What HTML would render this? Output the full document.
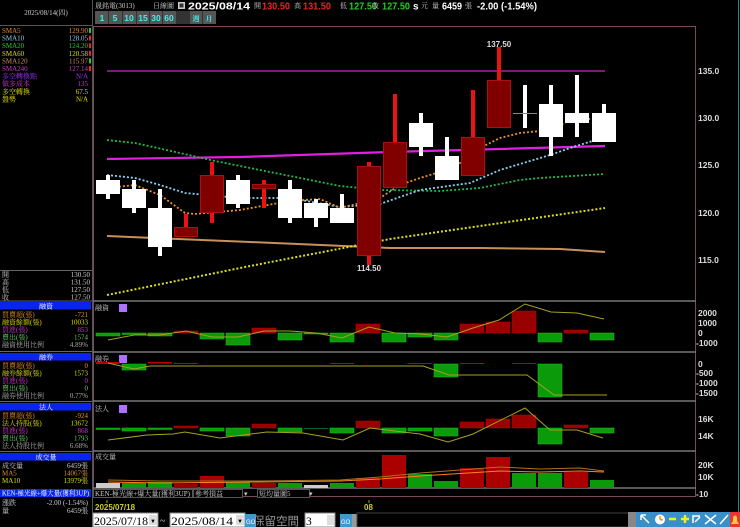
<!DOCTYPE html>
<html><head><meta charset="utf-8">
<style>
html,body{margin:0;padding:0;background:#000;width:740px;height:527px;overflow:hidden}
svg{display:block}
text{font-family:"Liberation Serif","Noto Serif CJK SC","WenQuanYi Zen Hei",serif;font-size:7px}
.b{font-family:"Liberation Sans","Noto Sans CJK TC",sans-serif;font-weight:bold;font-size:10px}
.ax{font-family:"Liberation Sans",sans-serif;font-weight:bold;font-size:8.5px;fill:#ddd}
</style></head><body>
<svg width="740" height="527" viewBox="0 0 740 527" xmlns="http://www.w3.org/2000/svg">
<rect width="740" height="527" fill="#000"/>
<!-- left panel -->
<line x1="92.5" y1="0" x2="92.5" y2="527" stroke="#555" stroke-width="1"/>
<line x1="0" y1="25.5" x2="92" y2="25.5" stroke="#555"/>
<text x="46" y="15" fill="#ccc" text-anchor="middle">2025/08/14(四)</text>
<g text-anchor="start">
<text x="2" y="33" fill="#e08a2a">SMA5</text>
<text x="2" y="40.6" fill="#8cc8e8">SMA10</text>
<text x="2" y="48.2" fill="#22cc22">SMA20</text>
<text x="2" y="55.8" fill="#dddd00">SMA60</text>
<text x="2" y="63.4" fill="#c89060">SMA120</text>
<text x="2" y="71" fill="#cc33cc">SMA240</text>
<text x="2" y="78.6" fill="#9933ff">多空轉換點</text>
<text x="2" y="86.2" fill="#cc33cc">做多成本</text>
<text x="2" y="93.8" fill="#dddd00">多空轉換</text>
<text x="2" y="101.4" fill="#dddd00">盤勢</text>
</g>
<g text-anchor="end">
<text x="88" y="33" fill="#e08a2a">129.90</text>
<text x="88" y="40.6" fill="#8cc8e8">128.05</text>
<text x="88" y="48.2" fill="#22cc22">124.20</text>
<text x="88" y="55.8" fill="#dddd00">120.58</text>
<text x="88" y="63.4" fill="#c89060">115.97</text>
<text x="88" y="71" fill="#cc33cc">127.14</text>
<text x="88" y="78.6" fill="#9933ff">N/A</text>
<text x="88" y="86.2" fill="#cc33cc">135</text>
<text x="88" y="93.8" fill="#dddd00">67.5</text>
<text x="88" y="101.4" fill="#dddd00">N/A</text>
</g>
<rect x="89" y="28" width="2" height="5" fill="#2c2"/><rect x="89" y="35.6" width="2" height="5" fill="#e22"/><rect x="89" y="43.2" width="2" height="5" fill="#e22"/><rect x="89" y="50.8" width="2" height="5" fill="#e22"/><rect x="89" y="58.4" width="2" height="5" fill="#2c2"/><rect x="89" y="66" width="2" height="5" fill="#e22"/>
<line x1="0" y1="270.5" x2="92" y2="270.5" stroke="#666"/>
<g fill="#ccc"><text x="2" y="277">開</text><text x="2" y="284.5">高</text><text x="2" y="292">低</text><text x="2" y="299.5">收</text></g>
<g fill="#ccc" text-anchor="end"><text x="90" y="277">130.50</text><text x="90" y="284.5">131.50</text><text x="90" y="292">127.50</text><text x="90" y="299.5">127.50</text></g>
<line x1="0" y1="301" x2="92" y2="301" stroke="#666"/>
<!-- panel 1 left -->
<rect x="0" y="302" width="91" height="7.5" fill="#0a24f0"/><text x="46" y="308.5" fill="#fff" text-anchor="middle">融資</text>
<text x="2" y="317" fill="#e08a2a">買賣超(張)</text><text x="2" y="324.5" fill="#dddd00">融資餘額(張)</text><text x="2" y="332" fill="#cc33cc">買進(張)</text><text x="2" y="339.5" fill="#6c6">賣出(張)</text><text x="2" y="347" fill="#aaa">融資使用比例</text>
<g text-anchor="end"><text x="88" y="317" fill="#e08a2a">-721</text><text x="88" y="324.5" fill="#dddd00">10033</text><text x="88" y="332" fill="#cc33cc">853</text><text x="88" y="339.5" fill="#6c6">1574</text><text x="88" y="347" fill="#aaa">4.89%</text></g>
<line x1="0" y1="351.5" x2="92" y2="351.5" stroke="#666"/>
<rect x="0" y="353" width="91" height="7.5" fill="#0a24f0"/><text x="46" y="359.5" fill="#fff" text-anchor="middle">融券</text>
<text x="2" y="368" fill="#e08a2a">買賣超(張)</text><text x="2" y="375.5" fill="#dddd00">融券餘額(張)</text><text x="2" y="383" fill="#cc33cc">買進(張)</text><text x="2" y="390.5" fill="#6c6">賣出(張)</text><text x="2" y="398" fill="#aaa">融券使用比例</text>
<g text-anchor="end"><text x="88" y="368" fill="#e08a2a">0</text><text x="88" y="375.5" fill="#dddd00">1573</text><text x="88" y="383" fill="#cc33cc">0</text><text x="88" y="390.5" fill="#6c6">0</text><text x="88" y="398" fill="#aaa">0.77%</text></g>
<line x1="0" y1="401.5" x2="92" y2="401.5" stroke="#666"/>
<rect x="0" y="403" width="91" height="7.5" fill="#0a24f0"/><text x="46" y="409.5" fill="#fff" text-anchor="middle">法人</text>
<text x="2" y="418" fill="#e08a2a">買賣超(張)</text><text x="2" y="425.5" fill="#dddd00">法人持股(張)</text><text x="2" y="433" fill="#cc33cc">買進(張)</text><text x="2" y="440.5" fill="#6c6">賣出(張)</text><text x="2" y="448" fill="#aaa">法人持股比例</text>
<g text-anchor="end"><text x="88" y="418" fill="#e08a2a">-924</text><text x="88" y="425.5" fill="#dddd00">13672</text><text x="88" y="433" fill="#cc33cc">868</text><text x="88" y="440.5" fill="#6c6">1793</text><text x="88" y="448" fill="#aaa">6.68%</text></g>
<line x1="0" y1="451.5" x2="92" y2="451.5" stroke="#666"/>
<rect x="0" y="453" width="91" height="7.5" fill="#0a24f0"/><text x="46" y="459.5" fill="#fff" text-anchor="middle">成交量</text>
<text x="2" y="468" fill="#ccc">成交量</text><text x="2" y="475.5" fill="#e08a2a">MA5</text><text x="2" y="483" fill="#dddd00">MA10</text>
<g text-anchor="end"><text x="88" y="468" fill="#ccc">6459張</text><text x="88" y="475.5" fill="#e08a2a">14067張</text><text x="88" y="483" fill="#dddd00">13979張</text></g>
<rect x="0" y="489" width="91" height="8" fill="#0a24f0"/><text x="2" y="495.5" fill="#fff" textLength="87" lengthAdjust="spacingAndGlyphs">KEN-極光線+爆大量(獲利3UP)</text>
<text x="2" y="505" fill="#ccc">漲跌</text><text x="88" y="505" fill="#ccc" text-anchor="end">-2.00 (-1.54%)</text>
<text x="2" y="513" fill="#ccc">量</text><text x="88" y="513" fill="#ccc" text-anchor="end">6459張</text>

<!-- header -->
<text x="95" y="8" fill="#ccc">晟銘電(3013)</text>
<text x="153" y="8" fill="#ccc">日線圖</text>
<rect x="178" y="2" width="7" height="7" fill="#ccc"/><rect x="179.5" y="3.5" width="4" height="4" fill="#333"/>
<text class="b" x="188" y="9.5" fill="#fff" textLength="62" lengthAdjust="spacingAndGlyphs">2025/08/14</text>
<text x="254" y="8" fill="#ccc">開</text><text class="b" x="262" y="9.5" fill="#e22" textLength="28" lengthAdjust="spacingAndGlyphs">130.50</text>
<text x="294" y="8" fill="#ccc">高</text><text class="b" x="303" y="9.5" fill="#e22" textLength="28" lengthAdjust="spacingAndGlyphs">131.50</text>
<text x="340" y="8" fill="#ccc">低</text><text class="b" x="349" y="9.5" fill="#2c2" textLength="28" lengthAdjust="spacingAndGlyphs">127.50</text>
<text x="372" y="8" fill="#ccc">收</text><text class="b" x="382" y="9.5" fill="#2c2" textLength="28" lengthAdjust="spacingAndGlyphs">127.50</text>
<text class="b" x="413" y="9.5" fill="#fff">s</text><text x="421" y="8" fill="#ccc">元</text>
<text x="432" y="8" fill="#ccc">量</text><text class="b" x="442" y="9.5" fill="#fff" textLength="20" lengthAdjust="spacingAndGlyphs">6459</text><text x="465" y="8" fill="#ccc">張</text>
<text class="b" x="477" y="9.5" fill="#fff" textLength="60" lengthAdjust="spacingAndGlyphs">-2.00 (-1.54%)</text>
<!-- buttons -->
<rect x="95" y="11" width="121" height="13" fill="#555"/>
<g stroke="#333" stroke-width="1"><line x1="108.5" y1="11" x2="108.5" y2="24"/><line x1="122.5" y1="11" x2="122.5" y2="24"/><line x1="136.5" y1="11" x2="136.5" y2="24"/><line x1="149.5" y1="11" x2="149.5" y2="24"/><line x1="162.5" y1="11" x2="162.5" y2="24"/><line x1="176.5" y1="11" x2="176.5" y2="24"/><line x1="189.5" y1="11" x2="189.5" y2="24"/><line x1="202.5" y1="11" x2="202.5" y2="24"/></g>
<rect x="177" y="11" width="12" height="13" fill="#333"/>
<g fill="#4ee" text-anchor="middle" style="font-family:Liberation Sans;font-weight:bold"><text x="102" y="21" style="font-size:8.5px;font-family:Liberation Sans">1</text><text x="115" y="21" style="font-size:8.5px;font-family:Liberation Sans">5</text><text x="129" y="21" style="font-size:8.5px;font-family:Liberation Sans">10</text><text x="143" y="21" style="font-size:8.5px;font-family:Liberation Sans">15</text><text x="156" y="21" style="font-size:8.5px;font-family:Liberation Sans">30</text><text x="169" y="21" style="font-size:8.5px;font-family:Liberation Sans">60</text><text x="196" y="21">週</text><text x="209" y="21">月</text></g>

<!-- main frame -->
<rect x="93.5" y="26.5" width="602" height="470" fill="none" stroke="#7a4a5a"/>
<line x1="738.5" y1="0" x2="738.5" y2="527" stroke="#1a8a8a"/>
<g><text class="ax" x="698" y="74">135.0</text><text class="ax" x="698" y="121">130.0</text><text class="ax" x="698" y="168">125.0</text><text class="ax" x="698" y="216">120.0</text><text class="ax" x="698" y="263">115.0</text>
<text class="ax" x="698" y="316">2000</text><text class="ax" x="698" y="326">1000</text><text class="ax" x="698" y="336">0</text><text class="ax" x="696" y="346">-1000</text>
<text class="ax" x="698" y="367">0</text><text class="ax" x="696" y="376">-500</text><text class="ax" x="696" y="386">-1000</text><text class="ax" x="696" y="396">-1500</text>
<text class="ax" x="698" y="422">16K</text><text class="ax" x="698" y="439">14K</text>
<text class="ax" x="698" y="468">20K</text><text class="ax" x="698" y="480">10K</text><text class="ax" x="696" y="497">-10</text></g>

<!-- MA lines main -->
<line x1="107" y1="71" x2="605" y2="71" stroke="#7a1a7a" stroke-width="2"/>
<polyline points="107,159 240,157 390,152 500,149 605,146" fill="none" stroke="#e020e0" stroke-width="2.2"/>
<polyline points="107,236 250,242 390,248 480,248 560,249 605,252" fill="none" stroke="#c8905a" stroke-width="2"/>
<polyline points="107,295 250,266 390,239 480,226 605,208" fill="none" stroke="#dddd22" stroke-width="2" stroke-dasharray="2,2"/>
<polyline points="107,140 135,143 180,153 215,161 300,178 340,186 380,190 440,191 480,188 520,180 540,178 605,174" fill="none" stroke="#22bb44" stroke-width="1.8" stroke-dasharray="2,2"/>
<polyline points="107,175 135,178 160,185 185,193 240,198 290,198 340,207 380,204 420,190 470,183 500,170 550,155 570,148 605,137" fill="none" stroke="#8cd0f0" stroke-width="1.8" stroke-dasharray="2,2"/>
<polyline points="107,188 135,185 160,195 185,213 195,214 240,210 290,201 320,199 340,208 380,198 400,185 420,178 440,172 460,163 480,148 500,138 520,133 550,130 575,118 605,120" fill="none" stroke="#e8902a" stroke-width="1.8" stroke-dasharray="2,2"/>

<!-- candles -->
<g fill="#fff">
<rect x="106" y="175" width="4" height="24"/><rect x="96" y="180" width="24" height="14"/>
<rect x="132" y="180" width="4" height="33"/><rect x="122" y="189" width="24" height="19"/>
<rect x="158" y="189" width="4" height="67"/><rect x="148" y="208" width="24" height="39"/>
<rect x="236" y="175" width="4" height="33"/><rect x="226" y="180" width="24" height="24"/>
<rect x="288" y="180" width="4" height="43"/><rect x="278" y="189" width="24" height="29"/>
<rect x="314" y="199" width="4" height="28"/><rect x="304" y="203" width="24" height="15"/>
<rect x="340" y="194" width="4" height="29"/><rect x="330" y="208" width="24" height="15"/>
<rect x="419" y="113" width="4" height="43"/><rect x="409" y="123" width="24" height="24"/>
<rect x="445" y="137" width="4" height="43"/><rect x="435" y="156" width="24" height="24"/>
<rect x="523" y="85" width="4" height="43"/>
<rect x="549" y="85" width="4" height="71"/><rect x="539" y="104" width="24" height="33"/>
<rect x="575" y="75" width="4" height="62"/><rect x="565" y="113" width="24" height="10"/>
<rect x="602" y="104" width="4" height="38"/><rect x="592" y="113" width="24" height="29"/>
</g>
<line x1="513" y1="113.5" x2="537" y2="113.5" stroke="#888" stroke-width="1"/>
<g fill="#ee1111">
<rect x="184" y="214" width="4" height="14"/><rect x="210" y="162" width="4" height="61"/><rect x="262" y="180" width="4" height="28"/>
<rect x="367" y="162" width="4" height="103"/><rect x="393" y="94" width="4" height="50"/><rect x="471" y="90" width="4" height="50"/><rect x="497" y="47" width="4" height="35"/>
</g>
<g fill="#800000" stroke="#aa1010" stroke-width="1">
<rect x="174.5" y="227.5" width="23" height="9"/>
<rect x="200.5" y="175.5" width="23" height="37"/>
<rect x="252.5" y="184.5" width="23" height="4"/>
<rect x="357.5" y="166.5" width="23" height="89"/>
<rect x="383.5" y="142.5" width="23" height="45"/>
<rect x="461.5" y="137.5" width="23" height="38"/>
<rect x="487.5" y="80.5" width="23" height="47"/>
</g>
<text x="499" y="47" fill="#ddd" text-anchor="middle" style="font-family:Liberation Sans;font-weight:bold;font-size:8px">137.50</text>
<text x="369" y="271" fill="#ddd" text-anchor="middle" style="font-family:Liberation Sans;font-weight:bold;font-size:8px">114.50</text>

<!-- separators -->
<g stroke="#777" stroke-width="1.5"><line x1="93" y1="301" x2="696" y2="301"/><line x1="93" y1="352" x2="696" y2="352"/><line x1="93" y1="401" x2="696" y2="401"/><line x1="93" y1="451" x2="696" y2="451"/><line x1="93" y1="488" x2="696" y2="488"/></g>

<!-- panel1 -->
<text x="95" y="310" fill="#ccc">融資</text><rect x="119" y="304" width="8" height="8" fill="#b070ff"/>
<g fill="#0a9a0a" stroke="#1c1" stroke-width="0.5">
<rect x="96" y="333" width="24" height="3"/><rect x="122" y="333" width="24" height="1.5"/><rect x="148" y="333" width="24" height="3"/>
<rect x="200" y="333" width="24" height="6"/><rect x="226" y="333" width="24" height="12"/><rect x="278" y="333" width="24" height="7"/><rect x="304" y="333" width="24" height="1"/><rect x="330" y="333" width="24" height="9"/><rect x="382" y="333" width="24" height="9"/><rect x="408" y="333" width="24" height="4"/><rect x="434" y="333" width="24" height="7"/><rect x="538" y="333" width="24" height="9"/><rect x="590" y="333" width="24" height="7"/>
</g>
<g fill="#900" stroke="#b00" stroke-width="0.5">
<rect x="174" y="331" width="24" height="2"/><rect x="252" y="328" width="24" height="5"/><rect x="356" y="324" width="24" height="9"/><rect x="460" y="324" width="24" height="9"/><rect x="486" y="322" width="24" height="11"/><rect x="512" y="311" width="24" height="22"/><rect x="564" y="330" width="24" height="3"/>
</g>
<polyline points="108,340 134,335 160,335 186,331 212,337 238,337 264,331 290,331 316,333 342,338 369,327 395,333 421,334 447,337 473,328 499,320 525,304 551,312 577,313 604,319" fill="none" stroke="#a8a020" stroke-width="1"/>

<!-- panel2 -->
<text x="95" y="361" fill="#ccc">融券</text><rect x="119" y="355" width="8" height="8" fill="#b070ff"/>
<g fill="#b00"><rect x="96" y="362" width="24" height="2"/><rect x="148" y="362" width="24" height="1.5"/><rect x="174" y="363" width="24" height="1"/><rect x="330" y="363" width="24" height="1"/><rect x="408" y="363" width="24" height="1"/><rect x="460" y="363" width="24" height="1"/><rect x="512" y="363" width="24" height="1"/></g>
<g fill="#0a9a0a" stroke="#1c1" stroke-width="0.5"><rect x="122" y="364" width="24" height="6"/><rect x="434" y="364" width="24" height="13"/><rect x="538" y="364" width="24" height="33"/></g>
<polyline points="108,363 134,369 150,366 423,366 449,375 527,375 554,395 607,395" fill="none" stroke="#a8a020" stroke-width="1"/>

<!-- panel3 -->
<text x="95" y="411" fill="#ccc">法人</text><rect x="119" y="405" width="8" height="8" fill="#b070ff"/>
<g fill="#0a9a0a" stroke="#1c1" stroke-width="0.5">
<rect x="96" y="428" width="24" height="1.5"/><rect x="122" y="428" width="24" height="3"/><rect x="148" y="428" width="24" height="1.5"/><rect x="200" y="428" width="24" height="3"/><rect x="226" y="428" width="24" height="8"/><rect x="278" y="428" width="24" height="4"/><rect x="330" y="428" width="24" height="5"/><rect x="382" y="428" width="24" height="5"/><rect x="408" y="428" width="24" height="3"/><rect x="434" y="428" width="24" height="8"/><rect x="538" y="428" width="24" height="16"/><rect x="590" y="428" width="24" height="5"/>
</g>
<rect x="304" y="428" width="24" height="1" fill="#063"/>
<g fill="#900" stroke="#b00" stroke-width="0.5"><rect x="174" y="426" width="24" height="2"/><rect x="252" y="424" width="24" height="4"/><rect x="356" y="421" width="24" height="7"/><rect x="460" y="422" width="24" height="6"/><rect x="486" y="419" width="24" height="9"/><rect x="512" y="415" width="24" height="13"/><rect x="564" y="425" width="24" height="3"/></g>
<polyline points="108,440 147,435 173,434 185,432 220,438 267,432 303,433 343,440 370,428 420,434 448,442 473,434 525,408 550,430 577,430 603,438" fill="none" stroke="#a8a020" stroke-width="1"/>

<!-- panel4 volume -->
<text x="95" y="459" fill="#ccc">成交量</text>
<rect x="96" y="483" width="24" height="5" fill="#ccc"/>
<rect x="122" y="483" width="24" height="5" fill="#0a9a0a"/><rect x="148" y="482" width="24" height="6" fill="#0a9a0a"/>
<rect x="174" y="484" width="24" height="4" fill="#900"/><rect x="200" y="476" width="24" height="12" fill="#a00"/>
<rect x="226" y="482" width="24" height="6" fill="#0a9a0a"/><rect x="252" y="483" width="24" height="5" fill="#900"/>
<rect x="278" y="483" width="24" height="5" fill="#0a9a0a"/><rect x="304" y="485" width="24" height="3" fill="#ccc"/>
<rect x="330" y="483" width="24" height="5" fill="#0a9a0a"/><rect x="356" y="478" width="24" height="10" fill="#a00"/>
<rect x="382" y="455" width="24" height="33" fill="#a00"/><rect x="408" y="474" width="24" height="14" fill="#0a9a0a"/>
<rect x="434" y="481" width="24" height="7" fill="#0a9a0a"/><rect x="460" y="468" width="24" height="20" fill="#a00"/>
<rect x="486" y="457" width="24" height="31" fill="#a00"/><rect x="512" y="473" width="24" height="15" fill="#0a9a0a"/>
<rect x="538" y="473" width="24" height="15" fill="#0a9a0a"/><rect x="564" y="472" width="24" height="16" fill="#a00"/>
<rect x="590" y="480" width="24" height="8" fill="#0a9a0a"/>
<polyline points="108,482 160,483 260,482 340,481 380,479 420,476 500,471 540,472 580,471 604,472" fill="none" stroke="#ff8020" stroke-width="1"/>
<polyline points="108,480 160,481 260,481 340,480 380,477 420,473 460,470 500,467 540,469 580,468 604,471" fill="none" stroke="#b07020" stroke-width="1"/>

<!-- dropdowns -->
<rect x="93.5" y="489.5" width="99" height="8" fill="#000" stroke="#555"/><text x="95" y="496" fill="#ccc" textLength="95" lengthAdjust="spacingAndGlyphs">KEN-極光線+爆大量(獲利3UP)</text>
<rect x="193.5" y="489.5" width="49" height="8" fill="#000" stroke="#555"/><text x="195" y="496" fill="#ccc">參考損益</text><text x="244" y="496" fill="#ccc">▾</text>
<rect x="257.5" y="489.5" width="52" height="8" fill="#000" stroke="#555"/><text x="259" y="496" fill="#ccc">短均量圖5</text><text x="309" y="496" fill="#ccc">▾</text>
<line x1="107" y1="500" x2="107" y2="503" stroke="#aa0"/>
<text x="95" y="510" fill="#cccc33" style="font-family:Liberation Sans;font-weight:bold;font-size:8px">2025/07/18</text>
<line x1="369" y1="500" x2="369" y2="503" stroke="#aa0"/>
<text x="364" y="510" fill="#cccc33" style="font-family:Liberation Sans;font-weight:bold;font-size:8px">08</text>
<!-- bottom inputs -->
<rect x="93" y="513" width="65" height="14" fill="#fff" stroke="#888"/><text x="94" y="525" fill="#000" style="font-size:11.5px" textLength="54" lengthAdjust="spacingAndGlyphs">2025/07/18</text><rect x="149" y="515" width="8" height="10" fill="#ddd"/><text x="150" y="523" fill="#000" style="font-size:6px">▼</text>
<text x="160" y="524" fill="#ccc" style="font-size:10px">~</text>
<rect x="170" y="513" width="75" height="14" fill="#fff" stroke="#888"/><text x="171" y="525" fill="#000" style="font-size:11.5px" textLength="62" lengthAdjust="spacingAndGlyphs">2025/08/14</text><rect x="236" y="515" width="8" height="10" fill="#ddd"/><text x="237" y="523" fill="#000" style="font-size:6px">▼</text>
<rect x="245" y="514" width="11" height="13" fill="#3a9ad0"/><text x="246" y="524" fill="#fff" style="font-size:6px;font-family:Liberation Sans">GO</text>
<text x="253" y="525" fill="#999" style="font-size:11.5px;font-family:'Noto Sans CJK TC',sans-serif">保留空間</text>
<rect x="305" y="513" width="30" height="14" fill="#fff" stroke="#888"/><text x="306" y="525" fill="#000" style="font-size:11.5px">3</text><rect x="327" y="515" width="7" height="10" fill="#ddd"/>
<rect x="340" y="514" width="12" height="13" fill="#3a9ad0"/><text x="341" y="524" fill="#fff" style="font-size:6px;font-family:Liberation Sans">GO</text>
<rect x="352" y="514" width="5" height="13" fill="#999"/>
<rect x="357" y="513" width="273" height="14" fill="#000" stroke="#444"/>
<!-- toolbar -->
<rect x="628" y="512" width="8" height="15" fill="#888"/>
<rect x="636" y="512" width="104" height="15" fill="#3a8fc8"/>
<g stroke="#fff" stroke-width="1.5" fill="none">
<path d="M641 515 L649 523 M641 515 L641 520 M641 515 L646 515"/>
<path d="M669 519 L676 519" stroke="#ee2" stroke-width="2.5"/>
<path d="M681 519 L689 519 M685 515 L685 523" stroke="#ee2" stroke-width="2.5"/>
<path d="M693 523 L693 516 L700 516 M695 522 L700 517"/>
<path d="M705 515 L716 524 M716 515 L705 524"/>
<path d="M720 524 L728 515"/>
</g>
<circle cx="660" cy="519.5" r="5" fill="#fff"/><path d="M660 519.5 L660 516 M660 519.5 L663 520" stroke="#f80" stroke-width="1.5"/>
<rect x="730" y="512" width="10" height="15" fill="#e33"/><path d="M731 524 L739 524 L737 521 L737 517 Q735 514 733 517 L733 521 Z" fill="#fc4"/>
</svg>
</body></html>
